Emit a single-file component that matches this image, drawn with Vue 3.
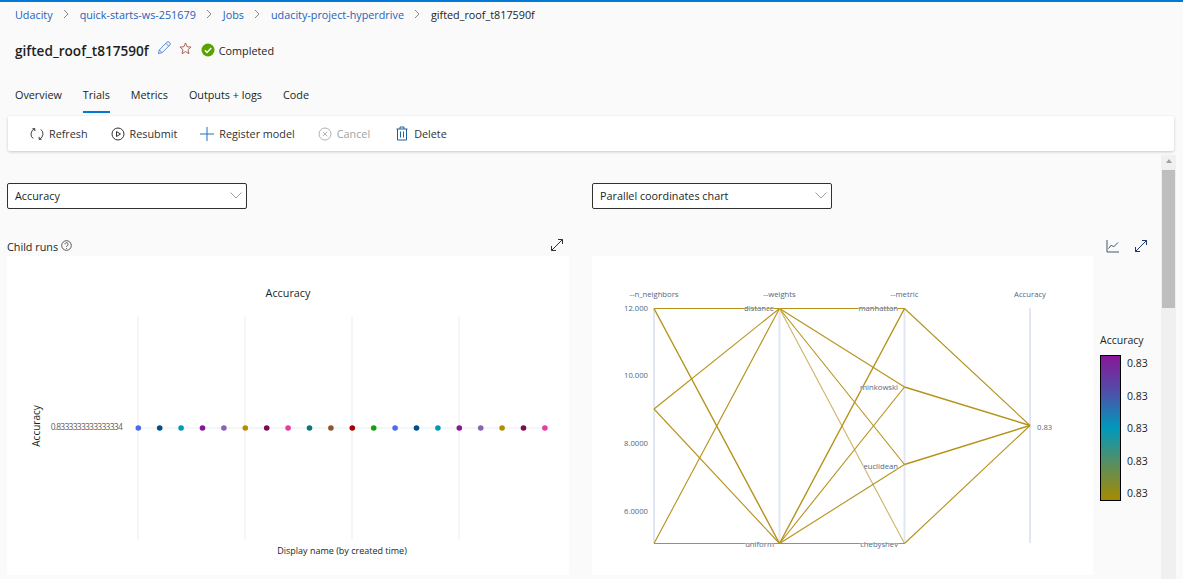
<template>
  <div class="page">
    <!-- Breadcrumb -->
    <nav class="crumbs">
      <template v-for="(c, i) in crumbs" :key="c">
        <a class="crumb">{{ c }}</a>
        <svg class="sep" width="6" height="10" viewBox="0 0 6 10"><path d="M1 1l4 4-4 4" fill="none" stroke="#8a8886" stroke-width="1" /></svg>
      </template>
      <span class="crumb-current">gifted_roof_t817590f</span>
    </nav>

    <!-- Title -->
    <div class="title-row">
      <h1>gifted_roof_t817590f</h1>
      <svg class="edit" width="14" height="14" viewBox="0 0 15 15"><path d="M1.5 13.5l1-4L10.800 1.200a1.500 1.500 0 0 1 2.100 0l.9.9a1.500 1.500 0 0 1 0 2.100L5.500 12.500zM2.500 9.500l3 3M9.500 2.500l3 3" fill="none" stroke="#4a7fd6" stroke-width="1" /></svg>
      <svg class="star" width="13" height="13" viewBox="0 0 14 14"><path d="M7 1l1.700 4.100 4.300.4-3.300 2.800 1 4.300L7 10.300 3.300 12.600l1-4.300L1 5.500l4.300-.4z" fill="none" stroke="#a8554a" stroke-width="1" /></svg>
      <svg class="check" width="14" height="14" viewBox="0 0 14 14"><circle cx="7" cy="7" r="6.500" fill="#57a300" /><path d="M3.800 7.200l2.200 2.200 4.200-4.400" fill="none" stroke="#fff" stroke-width="1.500" /></svg>
      <span class="state">Completed</span>
    </div>

    <!-- Tabs -->
    <div class="tabs">
      <span v-for="t in tabs" :key="t" class="tab" :class="{ active: t === 'Trials' }">{{ t }}</span>
    </div>

    <!-- Toolbar -->
    <div class="toolbar">
      <button class="tool">
        <svg width="14" height="14" viewBox="0 0 15 15" fill="none" stroke="#323130"><path d="M3.300 12.300A6 6 0 0 1 5 2M11.700 2.700A6 6 0 0 1 10 13" /><path d="M2.600 1.800H5.200V4.400M12.400 13.200H9.800V10.600" /></svg>
        Refresh
      </button>
      <button class="tool">
        <svg width="14" height="14" viewBox="0 0 14 14" fill="none" stroke="#323130"><circle cx="7" cy="7" r="6" /><path d="M5.500 4.500v5l4-2.500z" /></svg>
        Resubmit
      </button>
      <button class="tool">
        <svg width="14" height="14" viewBox="0 0 14 14" fill="none" stroke="#1f6fbf"><path d="M0 7h14M7 0v14" /></svg>
        Register model
      </button>
      <button class="tool off">
        <svg width="14" height="14" viewBox="0 0 14 14" fill="none" stroke="#b3b0ad"><circle cx="7" cy="7" r="6" /><path d="M4.800 4.800l4.400 4.400M9.200 4.800l-4.400 4.400" /></svg>
        Cancel
      </button>
      <button class="tool delete">
        <svg width="14" height="15" viewBox="0 0 14 15" fill="none" stroke="#1f5f99"><path d="M1.500 3h11M5 3V1h4v2M2.500 3v11h9V3M5.500 5.500v6M8.500 5.500v6" /></svg>
        Delete
      </button>
    </div>

    <div class="body">
      <main class="content">
        <div class="select-row">
          <div class="picker">
            <div class="select">Accuracy<svg width="12" height="7" viewBox="0 0 12 7"><path d="M.5.500L6 6l5.500-5.500" fill="none" stroke="#a19f9d" /></svg></div>
          </div>
          <div class="picker">
            <div class="select">Parallel coordinates chart<svg width="12" height="7" viewBox="0 0 12 7"><path d="M.5.500L6 6l5.500-5.500" fill="none" stroke="#a19f9d" /></svg></div>
          </div>
        </div>

        <div class="charts">
          <!-- Child runs scatter -->
          <section class="left">
            <div class="chart-head runs">
              <span class="label">Child runs</span>
              <svg class="help" width="11" height="11" viewBox="0 0 11 11" fill="none" stroke="#323130" stroke-width=".8"><circle cx="5.500" cy="5.500" r="4.800" /><path d="M3.900 4.300a1.600 1.600 0 1 1 2.500 1.300c-.6.400-.9.700-.9 1.400M5.500 8v.8" /></svg>
              <svg class="expand" width="14" height="14" viewBox="0 0 14 14" fill="none" stroke="#323130"><path d="M1.500 12.500l11-11M8 1.500h4.500V6M1.500 8v4.500H6" /></svg>
            </div>
            <div class="card">
              <svg viewBox="7 256 562 319" width="562" height="319">
                <line v-for="x in gridX" :key="x" :x1="x" :x2="x" y1="316" y2="540" class="grid" />
                <line x1="138" x2="546" y1="428" y2="428" class="grid" />
                <circle v-for="(d, i) in dots" :key="i" :cx="d.x" cy="428" r="2.800" :fill="d.color" />
                <text x="288" y="297" text-anchor="middle" class="chart-title">Accuracy</text>
                <text transform="translate(40 426) rotate(-90)" text-anchor="middle" class="axis-title side">Accuracy</text>
                <text x="122" y="430" text-anchor="end" class="tick">0.8333333333333334</text>
                <text x="342" y="554" text-anchor="middle" class="axis-title">Display name (by created time)</text>
              </svg>
            </div>
          </section>

          <!-- Parallel coordinates -->
          <section class="right">
            <div class="chart-head end">
              <svg width="14" height="14" viewBox="0 0 14 14" fill="none" stroke="#44546a"><path d="M1 1v12h12" /><path d="M2.500 9.500L5.500 6l2 2L12 3.500" /></svg>
              <svg width="14" height="14" viewBox="0 0 14 14" fill="none" stroke="#1b3a6b"><path d="M1.500 12.500l11-11M8 1.500h4.500V6M1.500 8v4.500H6" /></svg>
            </div>
            <div class="plot-row">
              <div class="card">
                <svg viewBox="592 256 501 319" width="501" height="319">
                  <line v-for="a in axes" :key="a.name" :x1="a.x" :x2="a.x" y1="308" y2="543" class="axis" />
                  <line v-for="(l, i) in links" :key="i" :x1="l[0]" :y1="l[1]" :x2="l[2]" :y2="l[3]" class="link" :class="l[4]" />
                  <text v-for="a in axes" :key="a.name" :x="a.x" y="297" text-anchor="middle" class="para">{{ a.name }}</text>
                  <text v-for="t in ticks" :key="t.text" :x="t.x" :y="t.y + 3" :text-anchor="t.anchor || 'end'" class="para">{{ t.text }}</text>
                </svg>
              </div>
              <div class="legend">
                <div class="legend-title">Accuracy</div>
                <div class="legend-body">
                  <div class="ramp"></div>
                  <div class="legend-ticks">
                    <span v-for="n in 5" :key="n">0.83</span>
                  </div>
                </div>
              </div>
            </div>
          </section>
        </div>
      </main>

      <!-- Scrollbar -->
      <div class="scrollbar">
        <div class="arrow"></div>
        <div class="thumb"></div>
      </div>
    </div>
  </div>
</template>

<script setup>
const crumbs = ['Udacity', 'quick-starts-ws-251679', 'Jobs', 'udacity-project-hyperdrive']
const tabs = ['Overview', 'Trials', 'Metrics', 'Outputs + logs', 'Code']

const gridX = [138, 245, 352, 459]
const palette = ['#4f6bed', '#004e8c', '#0099bc', '#881798', '#8764b8', '#b58e00', '#7a0c52', '#e43ba6', '#0b7a75', '#8e562e', '#a80000', '#13a10e']
const dots = Array.from({ length: 20 }, (_, i) => ({
  x: 138.300 + i * 21.400,
  color: palette[i % 12],
}))

const axes = [
  { name: '--n_neighbors', x: 654 },
  { name: '--weights', x: 779.500 },
  { name: '--metric', x: 904.500 },
  { name: 'Accuracy', x: 1030 },
]

const [A, B, C, D] = axes.map((a) => a.x)
const top = 308.500
const bottom = 543.500
const metric = { man: top, min: 387, euc: 464.500, che: bottom }
const acc = 425.500

const links = [
  [A, top, B, top],
  [A, top, B, bottom, 'thick'],
  [A, 409, B, top],
  [A, 409, B, bottom],
  [A, bottom, B, top],
  [A, bottom, B, bottom],
  [B, top, C, metric.man],
  [B, top, C, metric.min],
  [B, top, C, metric.euc],
  [B, top, C, metric.che, 'faint'],
  [B, bottom, C, metric.man, 'thick'],
  [B, bottom, C, metric.min],
  [B, bottom, C, metric.euc],
  [B, bottom, C, metric.che],
  [C, metric.man, D, acc],
  [C, metric.min, D, acc, 'thick'],
  [C, metric.euc, D, acc, 'thick'],
  [C, metric.che, D, acc],
]

const ticks = [
  { text: '12.000', x: 648, y: 308 },
  { text: '10.000', x: 648, y: 375 },
  { text: '8.0000', x: 648, y: 443 },
  { text: '6.0000', x: 648, y: 511 },
  { text: 'distance', x: 774, y: 308 },
  { text: 'uniform', x: 774, y: 544 },
  { text: 'manhattan', x: 898, y: 308 },
  { text: 'minkowski', x: 898, y: 387 },
  { text: 'euclidean', x: 898, y: 466 },
  { text: 'chebyshev', x: 898, y: 544 },
  { text: '0.83', x: 1037, y: 427, anchor: 'start' },
]
</script>

<style>
html, body { margin: 0; background: #fafafa; overflow: hidden; }
</style>

<style scoped>
.page {
  width: 1183px; height: 579px; overflow: hidden; box-sizing: border-box;
  border-top: 2px solid #0078d4; background: #fafafa; color: #201f1e;
  font-family: "Open Sans", "Liberation Sans", sans-serif; font-size: 10.800px;
  display: flex; flex-direction: column;
}
.crumbs { display: flex; align-items: center; gap: 8px; padding-left: 15px; height: 24px; }
.crumb { color: #1e62b8; }
.crumb-current { color: #201f1e; }
.sep { margin: 0 2.500px; }

.title-row { display: flex; align-items: center; height: 24px; margin-top: 12px; padding-left: 15px; }
h1 { margin: 0; font-size: 13.600px; font-weight: 600; color: #201f1e; }
.edit { margin-left: 8px; margin-top: -4px; }
.star { margin-left: 8px; margin-top: -3px; }
.check { margin-left: 9px; }
.state { margin-left: 4px; }

.tabs { display: flex; gap: 21px; padding-left: 15px; margin-top: 23px; height: 30px; }
.tab { line-height: 16px; padding-top: 2px; box-sizing: border-box; height: 28px; position: relative; }
.tab.active { border-bottom: 2px solid #0078d4; }

.toolbar {
  display: flex; align-items: center; gap: 23px; height: 35px; margin: 1px 9px 0 8px; padding-left: 22px;
  background: #fff; border-radius: 2px; box-shadow: 0 1px 3px rgba(0, 0, 0, 0.2);
}
.tool {
  display: flex; align-items: center; gap: 5px; padding: 0; border: none; background: none;
  font: inherit; color: #323130;
}
.tool.off { color: #a19f9d; }
.tool.delete { margin-left: 2px; }

.body { flex: 1; display: flex; margin-top: 4px; min-height: 0; }
.content { width: 1161px; padding-left: 7px; box-sizing: border-box; }

.select-row { display: grid; grid-template-columns: 562px 1fr; column-gap: 23px; padding-top: 28px; }
.select {
  width: 240px; height: 26px; box-sizing: border-box; padding: 0 4px 2px 7px;
  display: flex; align-items: center; justify-content: space-between;
  border: 1px solid #323130; border-radius: 2px; background: #fff;
}

.charts { display: flex; gap: 23px; margin-top: 26px; }
.left { width: 562px; }
.right { flex: 1; }
.chart-head { display: flex; align-items: center; height: 21px; box-sizing: border-box; }
.chart-head.runs { padding-top: 2px; }
.chart-head.end { justify-content: flex-end; gap: 14px; padding-right: 13px; }
.help { margin-left: 3px; margin-top: -3px; }
.expand { margin-left: auto; margin-right: 5px; margin-top: -3px; }
.card { background: #fff; height: 319px; }
.card svg { display: block; }

.grid { stroke: #ecedf0; stroke-width: 1; }
.chart-title { font-size: 10.800px; fill: #201f1e; }
.axis-title { font-size: 9px; fill: #201f1e; }
.axis-title.side { font-size: 10px; }
.tick { font-size: 8.500px; letter-spacing: -0.750px; fill: #605e5c; }

.axis { stroke: #e1e7f2; stroke-width: 2; }
.link { stroke: #b5921a; stroke-width: 1.100; }
.link.thick { stroke-width: 1.400; }
.link.faint { stroke: #cdb465; }
.para {
  font-size: 7.700px; fill: #506784;
  paint-order: stroke; stroke: #fff; stroke-width: .6px;
}

.plot-row { display: flex; }
.legend { margin-left: 7px; color: #201f1e; }
.legend-title { font-size: 10.500px; margin-top: 76px; line-height: 16px; }
.legend-body { display: flex; margin-top: 7px; }
.ramp {
  width: 19px; height: 144px; border: 1px solid #000; box-sizing: content-box;
  background: linear-gradient(180deg, #881798 0%, #4f4fa8 25%, #0099bc 50%, #4f8f6a 72%, #a68a00 100%);
}
.legend-ticks {
  display: flex; flex-direction: column; justify-content: space-between;
  margin: 1px 0 0 6px; font-size: 10.500px; line-height: 14px; height: 144px;
}

.scrollbar { width: 15px; background: #f0f0f0; position: relative; }
.arrow {
  width: 0; height: 0; margin: 4px auto 7px; border-left: 3px solid transparent;
  border-right: 3px solid transparent; border-bottom: 4px solid #a0a0a0;
}
.thumb { height: 138px; margin: 0 1px; background: #bebebe; }
</style>
